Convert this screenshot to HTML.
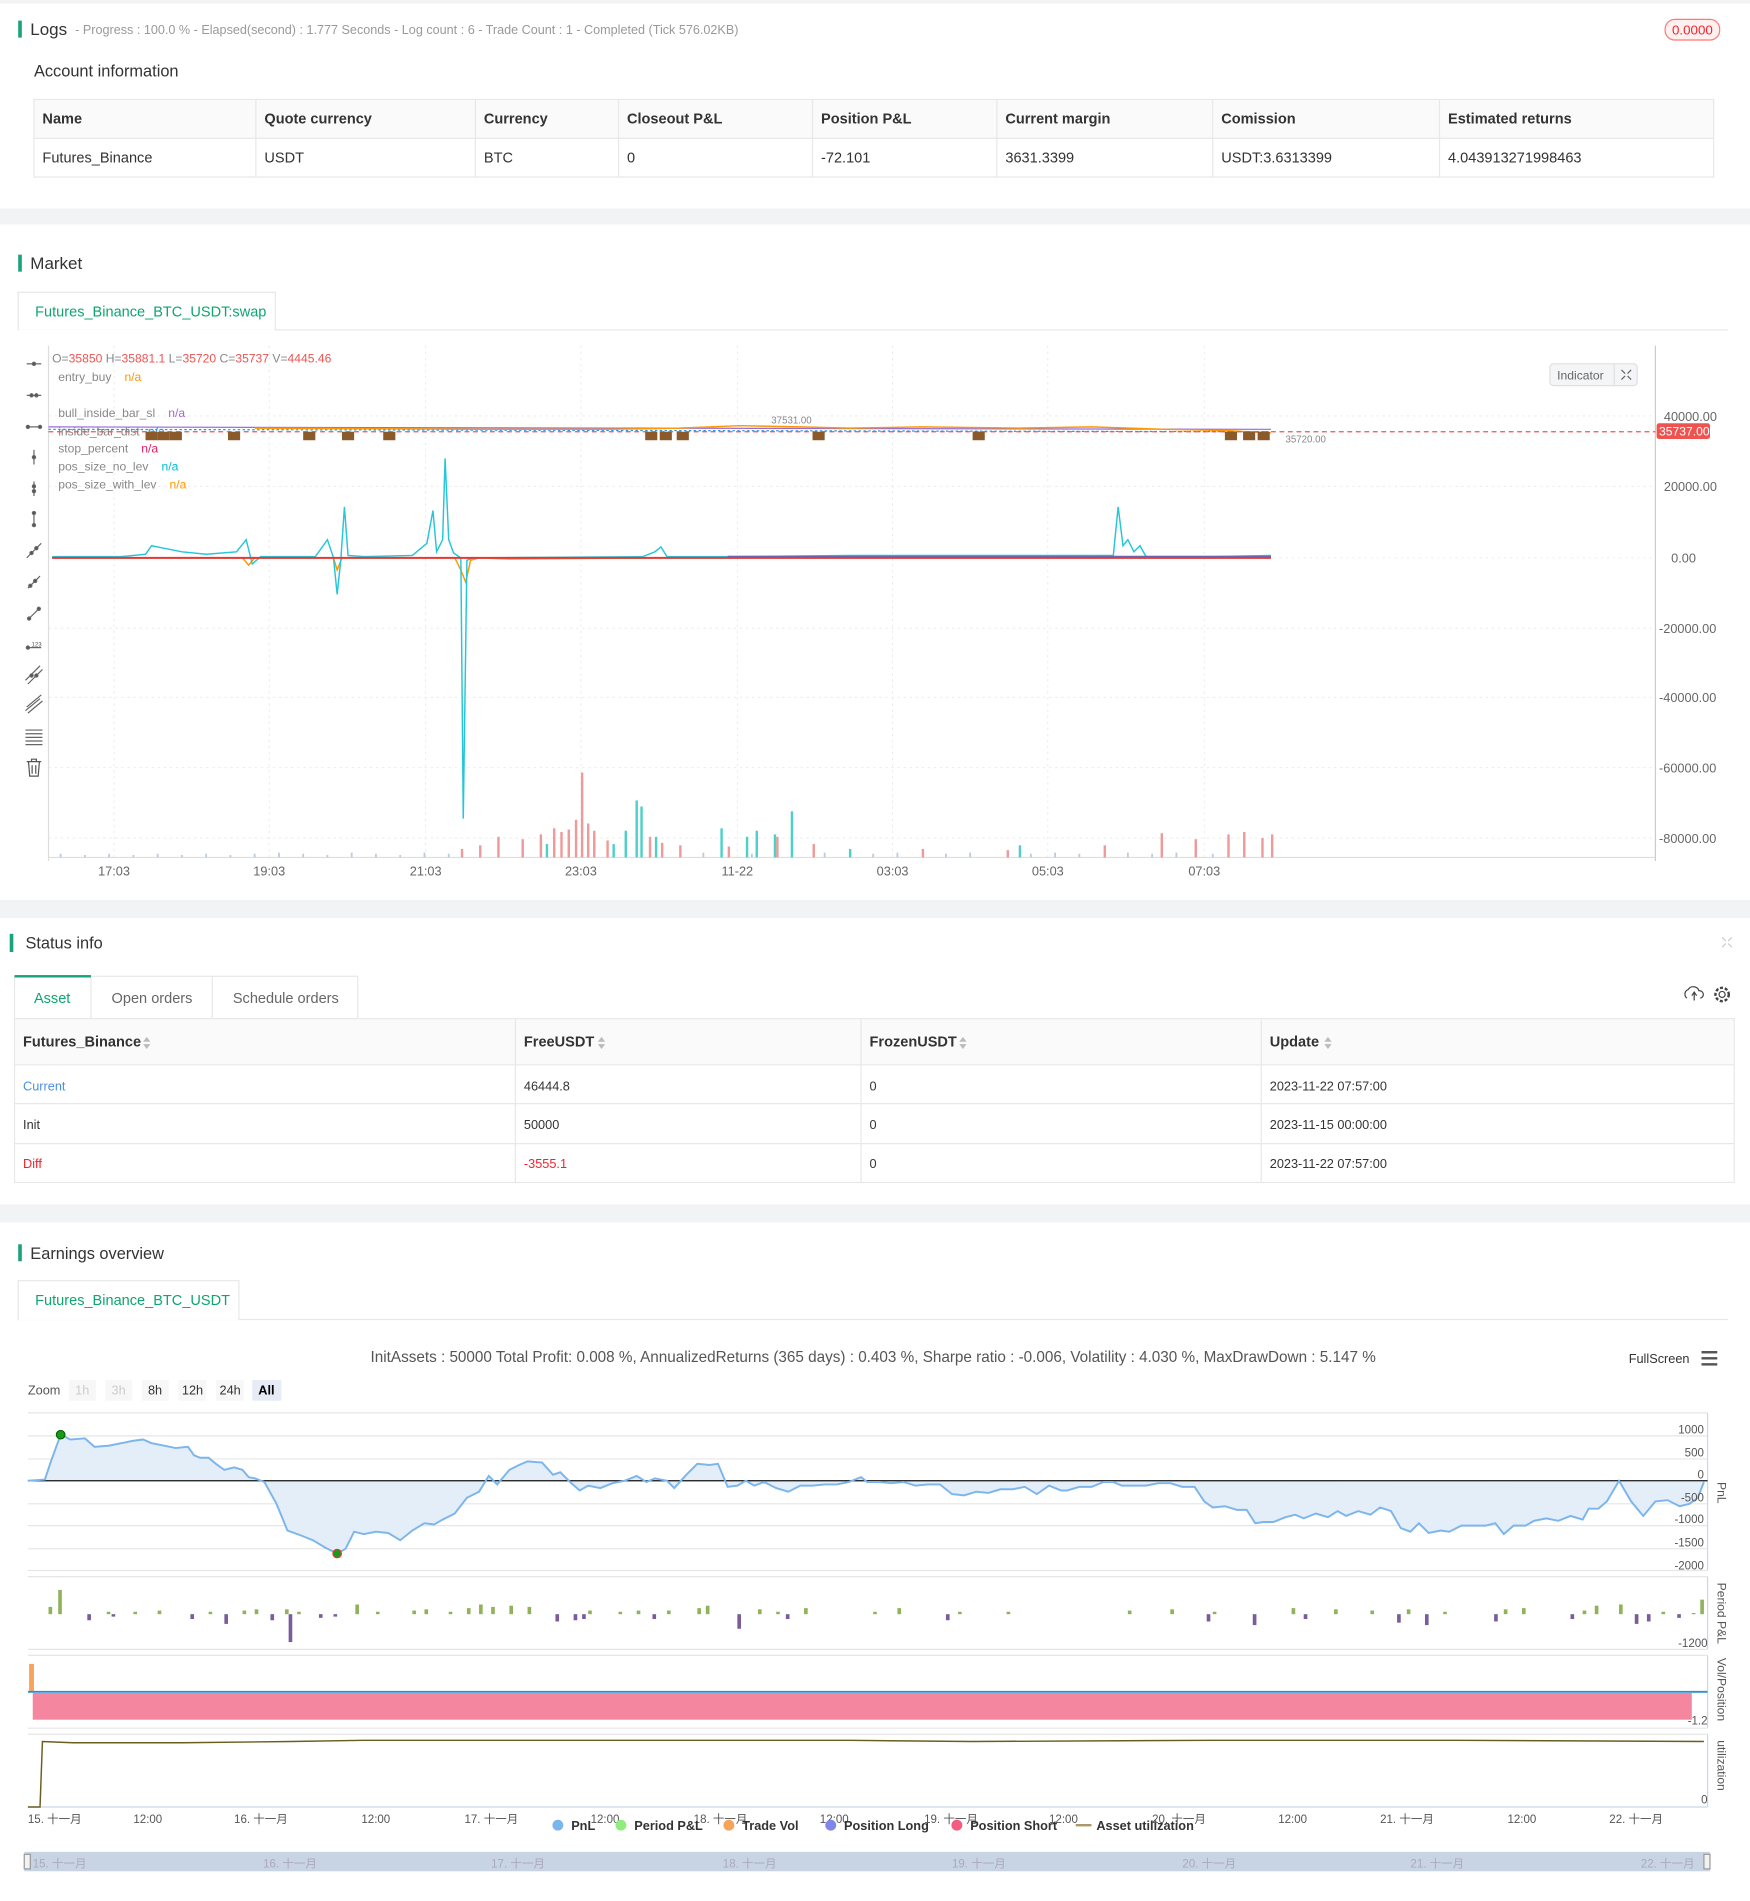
<!DOCTYPE html>
<html><head><meta charset="utf-8"><style>
html,body{margin:0;padding:0;background:#fff;}
svg{display:block;font-family:"Liberation Sans","Noto Sans CJK SC",sans-serif;}
</style></head><body>
<svg width="1750" height="1901" viewBox="0 0 1443 1567.5" preserveAspectRatio="none" xmlns="http://www.w3.org/2000/svg">
<rect width="1443" height="1567.5" fill="#fff"/>
<rect x="0" y="0" width="1443" height="3" fill="#f2f3f5"/>
<rect x="0" y="172" width="1443" height="13" fill="#f2f3f5"/>
<rect x="0" y="742" width="1443" height="15" fill="#f2f3f5"/>
<rect x="0" y="993" width="1443" height="15" fill="#f2f3f5"/>

<!-- Logs -->
<rect x="15" y="17" width="3" height="14" fill="#1aa37a"/>
<text x="25" y="29" font-size="14" fill="#333">Logs</text>
<text x="62" y="28" font-size="10.4" fill="#999">- Progress : 100.0 % - Elapsed(second) : 1.777  Seconds - Log count : 6 - Trade Count : 1 - Completed (Tick 576.02KB)</text>
<rect x="1373" y="16" width="45" height="17" rx="8" fill="#fff1f0" stroke="#ff7875"/>
<text x="1395.5" y="28.5" font-size="11" fill="#f5222d" text-anchor="middle">0.0000</text>
<text x="28" y="63" font-size="13.5" fill="#333">Account information</text>
<g font-size="12" fill="#333">
<rect x="28" y="82" width="1385" height="64" fill="#fff" stroke="#e8e8e8"/>
<rect x="28.5" y="82.5" width="1384" height="32" fill="#fafafa"/>
<line x1="28" y1="114" x2="1413" y2="114" stroke="#e8e8e8"/>
<g stroke="#e8e8e8"><line x1="211" y1="82" x2="211" y2="146"/><line x1="392" y1="82" x2="392" y2="146"/><line x1="510" y1="82" x2="510" y2="146"/><line x1="670" y1="82" x2="670" y2="146"/><line x1="822" y1="82" x2="822" y2="146"/><line x1="1000" y1="82" x2="1000" y2="146"/><line x1="1187" y1="82" x2="1187" y2="146"/></g>
<g font-weight="bold"><text x="35" y="102">Name</text><text x="218" y="102">Quote currency</text><text x="399" y="102">Currency</text><text x="517" y="102">Closeout P&amp;L</text><text x="677" y="102">Position P&amp;L</text><text x="829" y="102">Current margin</text><text x="1007" y="102">Comission</text><text x="1194" y="102">Estimated returns</text></g>
<text x="35" y="134">Futures_Binance</text><text x="218" y="134">USDT</text><text x="399" y="134">BTC</text><text x="517" y="134">0</text><text x="677" y="134">-72.101</text><text x="829" y="134">3631.3399</text><text x="1007" y="134">USDT:3.6313399</text><text x="1194" y="134">4.043913271998463</text>
</g>

<!-- Market -->
<rect x="15" y="210" width="3" height="14" fill="#1aa37a"/>
<text x="25" y="222" font-size="14" fill="#333">Market</text>
<line x1="15" y1="272" x2="1425" y2="272" stroke="#e8e8e8"/>
<rect x="15" y="241" width="212" height="31" fill="#fff" stroke="#e8e8e8"/>
<line x1="15.5" y1="272" x2="226.5" y2="272" stroke="#fff"/>
<text x="29" y="261" font-size="12" fill="#0ea56f">Futures_Binance_BTC_USDT:swap</text>

<g stroke="#e8e8e8" stroke-dasharray="2,3" stroke-width="0.7">
<line x1="94" y1="285" x2="94" y2="707"/><line x1="222" y1="285" x2="222" y2="707"/><line x1="351" y1="285" x2="351" y2="707"/><line x1="479" y1="285" x2="479" y2="707"/><line x1="608" y1="285" x2="608" y2="707"/><line x1="736" y1="285" x2="736" y2="707"/><line x1="864" y1="285" x2="864" y2="707"/><line x1="993" y1="285" x2="993" y2="707"/>
<line x1="40" y1="343" x2="1365" y2="343"/><line x1="40" y1="401" x2="1365" y2="401"/><line x1="40" y1="460" x2="1365" y2="460"/><line x1="40" y1="518" x2="1365" y2="518"/><line x1="40" y1="575" x2="1365" y2="575"/><line x1="40" y1="633" x2="1365" y2="633"/><line x1="40" y1="691" x2="1365" y2="691"/>
</g>
<line x1="40" y1="285" x2="40" y2="710" stroke="#ddd"/>
<line x1="1365" y1="285" x2="1365" y2="710" stroke="#ccc"/>
<line x1="40" y1="707" x2="1365" y2="707" stroke="#ddd"/>
<g font-size="10.5" fill="#666">
<text x="1372" y="347">40000.00</text><text x="1372" y="405">20000.00</text><text x="1378" y="464">0.00</text><text x="1368" y="522">-20000.00</text><text x="1368" y="579">-40000.00</text><text x="1368" y="637">-60000.00</text><text x="1368" y="695">-80000.00</text>
</g>
<g font-size="10.5" fill="#666" text-anchor="middle">
<text x="94" y="722">17:03</text><text x="222" y="722">19:03</text><text x="351" y="722">21:03</text><text x="479" y="722">23:03</text><text x="608" y="722">11-22</text><text x="736" y="722">03:03</text><text x="864" y="722">05:03</text><text x="993" y="722">07:03</text>
</g>
<!-- left toolbar -->
<g stroke="#666" stroke-width="1" fill="#555">
<line x1="22" y1="300" x2="34" y2="300"/><circle cx="28" cy="300" r="1.3"/>
<line x1="22" y1="326" x2="34" y2="326"/><circle cx="26" cy="326" r="1.3"/><circle cx="30" cy="326" r="1.3"/>
<line x1="22" y1="352" x2="34" y2="352"/><circle cx="23" cy="352" r="1.3"/><circle cx="33" cy="352" r="1.3"/>
<line x1="28" y1="371" x2="28" y2="383"/><circle cx="28" cy="377" r="1.3"/>
<line x1="28" y1="397" x2="28" y2="409"/><circle cx="28" cy="401" r="1.3"/><circle cx="28" cy="405" r="1.3"/>
<line x1="28" y1="422" x2="28" y2="434"/><circle cx="28" cy="423" r="1.3"/><circle cx="28" cy="433" r="1.3"/>
<line x1="22" y1="460" x2="34" y2="448"/><circle cx="26" cy="456" r="1.3"/><circle cx="30" cy="452" r="1.3"/>
<line x1="23" y1="485" x2="33" y2="475"/><circle cx="25" cy="483" r="1.3"/><circle cx="29" cy="479" r="1.3"/>
<line x1="24" y1="510" x2="32" y2="502"/><circle cx="24" cy="510" r="1.3"/><circle cx="32" cy="502" r="1.3"/>
<line x1="22" y1="534" x2="34" y2="534"/><circle cx="23" cy="534" r="1.3"/>
<line x1="21" y1="561" x2="33" y2="549"/><line x1="23" y1="564" x2="35" y2="552"/><circle cx="26" cy="557" r="1.3"/><circle cx="30" cy="557" r="1.3"/>
<line x1="21" y1="586" x2="33" y2="576"/><line x1="23" y1="588" x2="35" y2="578"/><line x1="22" y1="583" x2="34" y2="573"/>
<line x1="21" y1="602" x2="35" y2="602"/><line x1="21" y1="605" x2="35" y2="605"/><line x1="21" y1="608" x2="35" y2="608"/><line x1="21" y1="611" x2="35" y2="611"/><line x1="21" y1="614" x2="35" y2="614"/>
</g>
<text x="26" y="533" font-size="5" fill="#555">123</text>
<g stroke="#555" fill="none" stroke-width="1"><path d="M22 628h12M26 628v-2h4v2M23.5 628l1 12h7l1-12M26.5 631v7M29.5 631v7"/></g>

<text x="43" y="299" font-size="10" fill="#888">O=<tspan fill="#ef5350">35850</tspan> H=<tspan fill="#ef5350">35881.1</tspan> L=<tspan fill="#ef5350">35720</tspan> C=<tspan fill="#ef5350">35737</tspan> V=<tspan fill="#ef5350">4445.46</tspan></text>
<g font-size="10" fill="#888">
<text x="48" y="314">entry_buy <tspan dx="8" fill="#ff9800">n/a</tspan></text>
<text x="48" y="344">bull_inside_bar_sl <tspan dx="8" fill="#9c6ad6">n/a</tspan></text>
<text x="48" y="359">inside_bar_dist <tspan dx="4" fill="#2196f3">n/a</tspan></text>
<text x="48" y="373">stop_percent <tspan dx="8" fill="#e91e63">n/a</tspan></text>
<text x="48" y="388">pos_size_no_lev <tspan dx="8" fill="#00bcd4">n/a</tspan></text>
<text x="48" y="403">pos_size_with_lev <tspan dx="8" fill="#ff9800">n/a</tspan></text>
</g>
<rect x="1278" y="300" width="72" height="18" rx="3" fill="#f4f5f7" stroke="#e0e0e0"/>
<line x1="1331" y1="300" x2="1331" y2="318" stroke="#e0e0e0"/>
<text x="1284" y="313" font-size="10" fill="#666">Indicator</text>
<g stroke="#666" stroke-width="1"><path d="M1337 305l3 3M1345 305l-3 3M1337 313l3-3M1345 313l-3-3"/></g>

<!-- price lines -->
<polyline fill="none" stroke="#9c6ad6" stroke-width="1" points="40,352 500,353 1048,354"/>
<polyline fill="none" stroke="#2196f3" stroke-width="1" stroke-dasharray="2,2" points="40,354 1048,356"/>
<polyline fill="none" stroke="#ff9800" stroke-width="1.2" points="210,353 400,354 500,354 560,353 610,351 660,352 700,353 760,352 840,353 900,352 960,354 1010,355 1048,357"/>
<line x1="40" y1="356" x2="1365" y2="356" stroke="#ef5350" stroke-dasharray="4,3"/>
<rect x="1366" y="349" width="44" height="13" rx="2" fill="#ef5350"/>
<text x="1368" y="359" font-size="10" fill="#fff">35737.00</text>
<text x="636" y="349" font-size="8" fill="#888">37531.00</text>
<text x="1060" y="365" font-size="8" fill="#888">35720.00</text>
<g fill="#8b5a2b">
<rect x="120" y="356" width="10" height="7"/><rect x="130" y="356" width="10" height="7"/><rect x="140" y="356" width="10" height="7"/><rect x="188" y="356" width="10" height="7"/><rect x="250" y="356" width="10" height="7"/><rect x="282" y="356" width="10" height="7"/><rect x="316" y="356" width="10" height="7"/><rect x="532" y="356" width="10" height="7"/><rect x="544" y="356" width="10" height="7"/><rect x="558" y="356" width="10" height="7"/><rect x="670" y="356" width="10" height="7"/><rect x="802" y="356" width="10" height="7"/><rect x="1010" y="356" width="10" height="7"/><rect x="1025" y="356" width="10" height="7"/><rect x="1037" y="356" width="10" height="7"/>
</g>
<!-- indicator lines -->
<polyline fill="none" stroke="#ff9800" stroke-width="1.2" points="43,460 200,460 205,466 210,460 275,460 278,470 282,460 375,460 380,470 384,480 388,462 395,460 420,461 540,460 700,459 900,460 1048,459"/>
<polyline fill="none" stroke="#26c6da" stroke-width="1.2" points="43,459 100,459 120,457 125,450 135,452 150,455 170,457 195,455 203,445 208,465 215,459 260,459 270,445 275,460 278,490 281,462 284,418 287,458 300,459 340,458 352,448 357,421 360,455 365,445 367,378 370,445 374,456 380,460 382,675 385,462 390,460 530,459 540,455 545,451 550,459 600,459 700,458 900,458 918,458 922,418 926,450 930,445 935,455 940,450 945,459 1000,459 1048,458"/>
<polyline fill="none" stroke="#5c6bc0" stroke-width="1.5" points="600,459 800,459 1048,459"/>
<polyline fill="none" stroke="#e53935" stroke-width="1.6" points="43,460 1048,460"/>
<!-- volume -->
<g fill="#ef9a9a"><rect x="380" y="700" width="2" height="7"/><rect x="395" y="697" width="2" height="10"/><rect x="410" y="690" width="2" height="17"/><rect x="430" y="692" width="2" height="15"/><rect x="445" y="688" width="2" height="19"/><rect x="456" y="683" width="2" height="24"/><rect x="462" y="686" width="2" height="21"/><rect x="468" y="684" width="2" height="23"/><rect x="474" y="676" width="2" height="31"/><rect x="479" y="637" width="2" height="70"/><rect x="484" y="679" width="2" height="28"/><rect x="489" y="685" width="2" height="22"/><rect x="500" y="693" width="2" height="14"/><rect x="535" y="690" width="2" height="17"/><rect x="545" y="695" width="2" height="12"/><rect x="560" y="697" width="2" height="10"/><rect x="600" y="698" width="2" height="9"/><rect x="640" y="690" width="2" height="17"/><rect x="670" y="696" width="2" height="11"/><rect x="760" y="700" width="2" height="7"/><rect x="830" y="701" width="2" height="6"/><rect x="910" y="697" width="2" height="10"/><rect x="957" y="687" width="2" height="20"/><rect x="985" y="692" width="2" height="15"/><rect x="1012" y="688" width="2" height="19"/><rect x="1025" y="686" width="2" height="21"/><rect x="1040" y="691" width="2" height="16"/><rect x="1048" y="688" width="2" height="19"/></g>
<g fill="#4dd0c8"><rect x="450" y="696" width="2" height="11"/><rect x="505" y="696" width="2" height="11"/><rect x="515" y="685" width="2" height="22"/><rect x="524" y="660" width="2" height="47"/><rect x="528" y="665" width="2" height="42"/><rect x="540" y="690" width="2" height="17"/><rect x="594" y="683" width="2" height="24"/><rect x="615" y="690" width="2" height="17"/><rect x="623" y="685" width="2" height="22"/><rect x="638" y="688" width="2" height="19"/><rect x="652" y="669" width="2" height="38"/><rect x="700" y="700" width="2" height="7"/><rect x="840" y="697" width="2" height="10"/></g>
<g stroke="#bcd" stroke-width="1.5"><path d="M50 707v-3M70 707v-2M90 707v-3M110 707v-2M130 707v-3M150 707v-2M170 707v-3M190 707v-2M210 707v-3M230 707v-4M250 707v-3M270 707v-2M290 707v-4M310 707v-3M330 707v-2M350 707v-4M370 707v-3M580 707v-4M620 707v-3M680 707v-4M720 707v-3M740 707v-4M780 707v-3M800 707v-4M850 707v-3M870 707v-4M890 707v-3M930 707v-4M950 707v-3M970 707v-4M1000 707v-3"/></g>

<!-- Status info -->
<rect x="8" y="770" width="3" height="15" fill="#1aa37a"/>
<text x="21" y="782" font-size="13.5" fill="#333">Status info</text>
<g stroke="#ccc"><path d="M1420 773l3 3M1428 773l-3 3M1420 781l3-3M1428 781l-3-3"/></g>
<rect x="12" y="805" width="283" height="35" fill="#fff" stroke="#e8e8e8"/>
<line x1="75" y1="805" x2="75" y2="840" stroke="#e8e8e8"/><line x1="175" y1="805" x2="175" y2="840" stroke="#e8e8e8"/>
<rect x="12" y="804" width="63" height="2" fill="#1aa37a"/>
<text x="28" y="827" font-size="12" fill="#0ea56f">Asset</text>
<text x="92" y="827" font-size="12" fill="#666">Open orders</text>
<text x="192" y="827" font-size="12" fill="#666">Schedule orders</text>
<g stroke="#444" fill="none" stroke-width="1"><path d="M1391 823a4 4 0 0 1 1-7a5 5 0 0 1 9 1a3 3 0 0 1 1 6M1397 818v7M1395 821l2-3 2 3"/><circle cx="1420" cy="820" r="2.5"/><circle cx="1420" cy="820" r="5.5" stroke-dasharray="2.5,1.5" stroke-width="2"/></g>
<rect x="12" y="840" width="1418" height="135" fill="#fff" stroke="#e8e8e8"/>
<rect x="12.5" y="840.5" width="1417" height="37.5" fill="#fafafa"/>
<g stroke="#e8e8e8"><line x1="12" y1="878" x2="1430" y2="878"/><line x1="12" y1="910" x2="1430" y2="910"/><line x1="12" y1="943" x2="1430" y2="943"/><line x1="425" y1="840" x2="425" y2="975"/><line x1="710" y1="840" x2="710" y2="975"/><line x1="1040" y1="840" x2="1040" y2="975"/></g>
<g font-size="12" font-weight="bold" fill="#333"><text x="19" y="863">Futures_Binance</text><text x="432" y="863">FreeUSDT</text><text x="717" y="863">FrozenUSDT</text><text x="1047" y="863">Update</text></g>
<g fill="#bbb"><path d="M118 859l3-4 3 4zM118 861l3 4 3-4z"/><path d="M493 859l3-4 3 4zM493 861l3 4 3-4z"/><path d="M791 859l3-4 3 4zM791 861l3 4 3-4z"/><path d="M1092 859l3-4 3 4zM1092 861l3 4 3-4z"/></g>
<g font-size="10.5" fill="#333">
<text x="19" y="899" fill="#4a90e2">Current</text><text x="432" y="899">46444.8</text><text x="717" y="899">0</text><text x="1047" y="899">2023-11-22 07:57:00</text>
<text x="19" y="931">Init</text><text x="432" y="931">50000</text><text x="717" y="931">0</text><text x="1047" y="931">2023-11-15 00:00:00</text>
<text x="19" y="963" fill="#f5222d">Diff</text><text x="432" y="963" fill="#f5222d">-3555.1</text><text x="717" y="963">0</text><text x="1047" y="963">2023-11-22 07:57:00</text>
</g>

<!-- Earnings -->
<rect x="15" y="1026" width="3" height="14" fill="#1aa37a"/>
<text x="25" y="1038" font-size="13.5" fill="#333">Earnings overview</text>
<line x1="15" y1="1088" x2="1425" y2="1088" stroke="#e8e8e8"/>
<rect x="15" y="1056" width="182" height="32" fill="#fff" stroke="#e8e8e8"/>
<line x1="15.5" y1="1088" x2="196.5" y2="1088" stroke="#fff"/>
<text x="29" y="1076" font-size="12" fill="#0ea56f">Futures_Binance_BTC_USDT</text>
<text x="720" y="1123" font-size="12.6" fill="#555" text-anchor="middle">InitAssets : 50000 Total Profit: 0.008 %, AnnualizedReturns (365 days) : 0.403 %, Sharpe ratio : -0.006, Volatility : 4.030 %, MaxDrawDown : 5.147 %</text>
<text x="1343" y="1124" font-size="10.5" fill="#333">FullScreen</text>
<g fill="#555"><rect x="1403" y="1114" width="13" height="2"/><rect x="1403" y="1119" width="13" height="2"/><rect x="1403" y="1124" width="13" height="2"/></g>
<g font-size="10.5">
<text x="23" y="1150" fill="#555">Zoom</text>
<rect x="57" y="1138" width="22" height="17" fill="#f7f7f7"/><text x="62" y="1150" fill="#ccc">1h</text>
<rect x="87" y="1138" width="22" height="17" fill="#f7f7f7"/><text x="92" y="1150" fill="#ccc">3h</text>
<rect x="117" y="1138" width="22" height="17" fill="#f7f7f7"/><text x="122" y="1150" fill="#333">8h</text>
<rect x="147" y="1138" width="23" height="17" fill="#f7f7f7"/><text x="150" y="1150" fill="#333">12h</text>
<rect x="178" y="1138" width="23" height="17" fill="#f7f7f7"/><text x="181" y="1150" fill="#333">24h</text>
<rect x="208" y="1138" width="24" height="17" fill="#e6ebf5"/><text x="213" y="1150" fill="#000" font-weight="bold">All</text>
</g>
<g stroke="#e6e6e6"><line x1="23" y1="1165" x2="1408" y2="1165"/><line x1="23" y1="1184" x2="1408" y2="1184"/><line x1="23" y1="1203" x2="1408" y2="1203"/><line x1="23" y1="1240" x2="1408" y2="1240"/><line x1="23" y1="1258" x2="1408" y2="1258"/><line x1="23" y1="1277" x2="1408" y2="1277"/><line x1="23" y1="1295" x2="1408" y2="1295"/><line x1="23" y1="1300" x2="1408" y2="1300"/><line x1="23" y1="1360" x2="1408" y2="1360"/><line x1="23" y1="1365" x2="1408" y2="1365"/><line x1="23" y1="1425" x2="1408" y2="1425"/><line x1="23" y1="1430" x2="1408" y2="1430"/></g>
<g stroke="#ccd6eb"><line x1="1408" y1="1165" x2="1408" y2="1295"/><line x1="1408" y1="1300" x2="1408" y2="1360"/><line x1="1408" y1="1365" x2="1408" y2="1425"/><line x1="1408" y1="1430" x2="1408" y2="1490"/><line x1="23" y1="1490" x2="1408" y2="1490"/></g>
<polygon fill="#e3eef9" points="23,1221 37,1220 42,1205 50,1183 58,1187 70,1186 78,1193 90,1192 100,1190 110,1188 118,1187 125,1190 135,1192 145,1194 155,1193 160,1200 165,1202 172,1202 178,1207 185,1212 193,1210 200,1212 205,1218 210,1219 218,1222 228,1240 237,1262 248,1266 258,1270 268,1276 278,1281 285,1277 292,1263 300,1265 310,1263 320,1264 330,1270 340,1262 350,1256 358,1257 365,1253 375,1248 385,1235 395,1230 403,1217 410,1224 420,1212 428,1208 435,1205 447,1206 456,1216 462,1214 470,1222 478,1229 485,1225 495,1227 505,1223 515,1221 525,1217 533,1222 540,1219 550,1221 556,1227 565,1217 575,1207 585,1208 592,1207 600,1226 608,1225 615,1221 622,1225 630,1222 640,1227 650,1230 660,1225 670,1225 680,1224 690,1224 700,1222 710,1218 715,1222 725,1222 735,1223 745,1222 755,1225 765,1224 775,1224 785,1232 795,1233 805,1230 815,1231 825,1228 835,1228 845,1226 855,1232 865,1225 875,1229 880,1229 890,1226 900,1226 910,1222 918,1222 925,1225 935,1225 945,1225 955,1223 965,1223 975,1226 985,1226 993,1238 1000,1243 1010,1242 1020,1245 1028,1245 1035,1256 1042,1255 1050,1255 1060,1251 1068,1249 1075,1252 1085,1248 1095,1251 1103,1246 1110,1250 1120,1246 1130,1249 1138,1243 1147,1246 1155,1260 1163,1263 1170,1256 1178,1264 1188,1262 1195,1263 1205,1258 1215,1258 1225,1258 1233,1256 1240,1265 1248,1258 1258,1258 1265,1254 1275,1252 1285,1254 1295,1250 1305,1253 1310,1244 1318,1244 1325,1238 1335,1221 1345,1238 1355,1250 1365,1238 1375,1237 1385,1242 1393,1240 1400,1235 1405,1222"/>
<line x1="23" y1="1221" x2="1408" y2="1221" stroke="#111" stroke-width="1"/>
<polyline fill="none" stroke="#7cb5ec" stroke-width="1.6" points="23,1221 37,1220 42,1205 50,1183 58,1187 70,1186 78,1193 90,1192 100,1190 110,1188 118,1187 125,1190 135,1192 145,1194 155,1193 160,1200 165,1202 172,1202 178,1207 185,1212 193,1210 200,1212 205,1218 210,1219 218,1222 228,1240 237,1262 248,1266 258,1270 268,1276 278,1281 285,1277 292,1263 300,1265 310,1263 320,1264 330,1270 340,1262 350,1256 358,1257 365,1253 375,1248 385,1235 395,1230 403,1217 410,1224 420,1212 428,1208 435,1205 447,1206 456,1216 462,1214 470,1222 478,1229 485,1225 495,1227 505,1223 515,1221 525,1217 533,1222 540,1219 550,1221 556,1227 565,1217 575,1207 585,1208 592,1207 600,1226 608,1225 615,1221 622,1225 630,1222 640,1227 650,1230 660,1225 670,1225 680,1224 690,1224 700,1222 710,1218 715,1222 725,1222 735,1223 745,1222 755,1225 765,1224 775,1224 785,1232 795,1233 805,1230 815,1231 825,1228 835,1228 845,1226 855,1232 865,1225 875,1229 880,1229 890,1226 900,1226 910,1222 918,1222 925,1225 935,1225 945,1225 955,1223 965,1223 975,1226 985,1226 993,1238 1000,1243 1010,1242 1020,1245 1028,1245 1035,1256 1042,1255 1050,1255 1060,1251 1068,1249 1075,1252 1085,1248 1095,1251 1103,1246 1110,1250 1120,1246 1130,1249 1138,1243 1147,1246 1155,1260 1163,1263 1170,1256 1178,1264 1188,1262 1195,1263 1205,1258 1215,1258 1225,1258 1233,1256 1240,1265 1248,1258 1258,1258 1265,1254 1275,1252 1285,1254 1295,1250 1305,1253 1310,1244 1318,1244 1325,1238 1335,1221 1345,1238 1355,1250 1365,1238 1375,1237 1385,1242 1393,1240 1400,1235 1405,1222"/>
<circle cx="50" cy="1183" r="3.5" fill="#1a9a1a" stroke="#060"/>
<circle cx="278" cy="1281" r="3.5" fill="#1a9a1a" stroke="#e33"/>
<g font-size="9.5" fill="#555" text-anchor="end"><text x="1405" y="1182">1000</text><text x="1405" y="1201">500</text><text x="1405" y="1219">0</text><text x="1405" y="1238">-500</text><text x="1405" y="1256">-1000</text><text x="1405" y="1275">-1500</text><text x="1405" y="1294">-2000</text><text x="1408" y="1358">-1200</text><text x="1408" y="1422">-1.2</text><text x="1408" y="1487">0</text></g>
<!-- period bars -->
<g fill="#90b35a"><rect x="40" y="1325" width="3" height="6"/><rect x="48" y="1311" width="3" height="20"/><rect x="88" y="1329" width="3" height="2"/><rect x="110" y="1329" width="3" height="2"/><rect x="130" y="1328" width="3" height="3"/><rect x="172" y="1329" width="3" height="2"/><rect x="200" y="1328" width="3" height="3"/><rect x="210" y="1327" width="3" height="4"/><rect x="235" y="1327" width="3" height="4"/><rect x="245" y="1329" width="3" height="2"/><rect x="293" y="1323" width="3" height="8"/><rect x="310" y="1329" width="3" height="2"/><rect x="340" y="1328" width="3" height="3"/><rect x="350" y="1327" width="3" height="4"/><rect x="370" y="1329" width="3" height="2"/><rect x="385" y="1326" width="3" height="5"/><rect x="395" y="1323" width="3" height="8"/><rect x="405" y="1325" width="3" height="6"/><rect x="420" y="1324" width="3" height="7"/><rect x="435" y="1325" width="3" height="6"/><rect x="485" y="1328" width="3" height="3"/><rect x="510" y="1329" width="3" height="2"/><rect x="525" y="1328" width="3" height="3"/><rect x="550" y="1328" width="3" height="3"/><rect x="575" y="1326" width="3" height="5"/><rect x="582" y="1324" width="3" height="7"/><rect x="625" y="1327" width="3" height="4"/><rect x="640" y="1329" width="3" height="2"/><rect x="663" y="1326" width="3" height="5"/><rect x="720" y="1329" width="3" height="2"/><rect x="740" y="1326" width="3" height="5"/><rect x="790" y="1329" width="3" height="2"/><rect x="830" y="1329" width="3" height="2"/><rect x="930" y="1328" width="3" height="3"/><rect x="965" y="1327" width="3" height="4"/><rect x="1000" y="1329" width="3" height="2"/><rect x="1065" y="1326" width="3" height="5"/><rect x="1100" y="1327" width="3" height="4"/><rect x="1130" y="1328" width="3" height="3"/><rect x="1160" y="1327" width="3" height="4"/><rect x="1190" y="1329" width="3" height="2"/><rect x="1240" y="1327" width="3" height="4"/><rect x="1255" y="1326" width="3" height="5"/><rect x="1305" y="1328" width="3" height="3"/><rect x="1315" y="1324" width="3" height="7"/><rect x="1335" y="1323" width="3" height="8"/><rect x="1370" y="1329" width="3" height="2"/><rect x="1395" y="1330" width="3" height="1"/><rect x="1402" y="1319" width="3" height="12"/></g>
<g fill="#7a5c9a"><rect x="72" y="1331" width="3" height="5"/><rect x="92" y="1331" width="3" height="2"/><rect x="157" y="1331" width="3" height="4"/><rect x="185" y="1331" width="3" height="8"/><rect x="223" y="1331" width="3" height="5"/><rect x="238" y="1331" width="3" height="23"/><rect x="263" y="1331" width="3" height="3"/><rect x="275" y="1331" width="3" height="2"/><rect x="458" y="1331" width="3" height="6"/><rect x="473" y="1331" width="3" height="5"/><rect x="480" y="1331" width="3" height="4"/><rect x="538" y="1331" width="3" height="4"/><rect x="608" y="1331" width="3" height="12"/><rect x="648" y="1331" width="3" height="4"/><rect x="780" y="1331" width="3" height="5"/><rect x="995" y="1331" width="3" height="6"/><rect x="1033" y="1331" width="3" height="9"/><rect x="1075" y="1331" width="3" height="4"/><rect x="1152" y="1331" width="3" height="7"/><rect x="1175" y="1331" width="3" height="9"/><rect x="1232" y="1331" width="3" height="6"/><rect x="1295" y="1331" width="3" height="4"/><rect x="1348" y="1331" width="3" height="8"/><rect x="1358" y="1331" width="3" height="6"/><rect x="1383" y="1331" width="3" height="3"/></g>
<!-- vol/position -->
<rect x="24" y="1372" width="4" height="23" fill="#f7a35c"/>
<line x1="23" y1="1395" x2="1408" y2="1395" stroke="#2b8fd0" stroke-width="1.5"/>
<rect x="27" y="1396" width="1368" height="22" fill="#f4869f"/>
<!-- util -->
<polyline fill="none" stroke="#6b5d1e" stroke-width="1.2" points="23,1490 33,1490 35,1436 60,1437 150,1437 240,1436 300,1435 500,1435 700,1435 800,1436 1000,1435 1200,1435 1405,1436"/>
<!-- axis labels -->
<g font-size="9.5" fill="#555"><text x="23" y="1503">15. 十一月</text><text x="110" y="1503">12:00</text><text x="193" y="1503">16. 十一月</text><text x="298" y="1503">12:00</text><text x="383" y="1503">17. 十一月</text><text x="487" y="1503">12:00</text><text x="572" y="1503">18. 十一月</text><text x="676" y="1503">12:00</text><text x="762" y="1503">19. 十一月</text><text x="865" y="1503">12:00</text><text x="950" y="1503">20. 十一月</text><text x="1054" y="1503">12:00</text><text x="1138" y="1503">21. 十一月</text><text x="1243" y="1503">12:00</text><text x="1327" y="1503">22. 十一月</text></g>
<g font-size="10.5" font-weight="bold" fill="#333">
<circle cx="460" cy="1505" r="4.5" fill="#7cb5ec"/><text x="471" y="1509">PnL</text>
<circle cx="512" cy="1505" r="4.5" fill="#90ed7d"/><text x="523" y="1509">Period P&amp;L</text>
<circle cx="601" cy="1505" r="4.5" fill="#f7a35c"/><text x="612" y="1509">Trade Vol</text>
<circle cx="685" cy="1505" r="4.5" fill="#8085e9"/><text x="696" y="1509">Position Long</text>
<circle cx="789" cy="1505" r="4.5" fill="#f15c80"/><text x="800" y="1509">Position Short</text>
<line x1="887" y1="1505" x2="900" y2="1505" stroke="#a89a6a" stroke-width="2"/><text x="904" y="1509">Asset utilization</text>
</g>
<g font-size="10" fill="#555"><text transform="translate(1416,1222) rotate(90)">PnL</text><text transform="translate(1416,1305) rotate(90)">Period P&amp;L</text><text transform="translate(1416,1367) rotate(90)">Vol/Position</text><text transform="translate(1416,1435) rotate(90)">utilization</text></g>
<rect x="20" y="1527" width="1390" height="16" fill="#c8d3e3"/>
<g font-size="9.5" fill="#aab"><text x="27" y="1540">15. 十一月</text><text x="217" y="1540">16. 十一月</text><text x="405" y="1540">17. 十一月</text><text x="596" y="1540">18. 十一月</text><text x="785" y="1540">19. 十一月</text><text x="975" y="1540">20. 十一月</text><text x="1163" y="1540">21. 十一月</text><text x="1353" y="1540">22. 十一月</text></g>
<rect x="20" y="1529" width="5" height="12" fill="#f2f2f2" stroke="#999"/>
<rect x="1405" y="1529" width="5" height="12" fill="#f2f2f2" stroke="#999"/>
</svg>
</body></html>
